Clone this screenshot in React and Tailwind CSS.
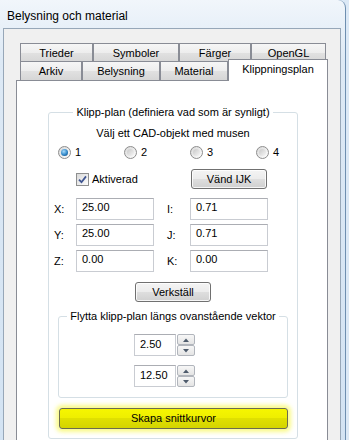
export default function App() {
  const tabIdle =
    'flex h-[19px] items-center justify-center border border-b-0 border-[#898c95] bg-[linear-gradient(#f6f6f6,#ededed_50%,#e1e1e1_50%,#d6d6d6)]';
  const field =
    'h-[22px] w-[78px] border border-[#c9ccd2] border-t-[#abadb3] bg-white pl-[5px] pt-[2px] leading-[13px]';
  const button =
    'flex h-[20px] items-center justify-center rounded-[3px] border border-[#707070] bg-[linear-gradient(#f4f4f4,#ececec_48%,#dedede_52%,#d0d0d0)] shadow-[inset_0_0_0_1px_rgba(255,255,255,0.8)] leading-[13px]';

  const Radio = ({ checked }) => (
    <span className="flex h-[13px] w-[13px] items-center justify-center rounded-full border border-[#8d8d8d] bg-[linear-gradient(135deg,#d8d8d8,#ffffff)]">
      {checked ? (
        <span className="h-[7px] w-[7px] rounded-full bg-[radial-gradient(circle_at_40%_35%,#a9dcfb,#2f86c8_55%,#0e3c69)]" />
      ) : (
        <span className="h-[7px] w-[7px] rounded-full bg-[linear-gradient(135deg,#c8c8c8,#f6f6f6)]" />
      )}
    </span>
  );

  const SpinBtn = ({ up }) => (
    <div className="flex h-[11px] items-center justify-center rounded-[2px] border border-[#b1b5bc] bg-[linear-gradient(#f7f7f7,#e4e4e4)]">
      <svg width="6" height="4" viewBox="0 0 6 4">
        <path d={up ? 'M0 4 L3 0.5 L6 4 Z' : 'M0 0 L3 3.5 L6 0 Z'} fill="#4e5b6c" />
      </svg>
    </div>
  );

  const Spin = ({ value }) => (
    <div className="ml-[75px] flex h-[22px]">
      <div className="w-[42px] border border-[#c9ccd2] border-t-[#abadb3] bg-white pl-[5px] pt-[3px] leading-[13px]">{value}</div>
      <div className="ml-[1px] flex w-[18px] flex-col">
        <SpinBtn up />
        <SpinBtn />
      </div>
    </div>
  );

  const Row = ({ a, av, b, bv }) => (
    <div className="ml-[5px] flex h-[22px] items-center">
      <span className="w-[22px] leading-[13px]">{a}</span>
      <div className={field}>{av}</div>
      <span className="ml-[13px] w-[23px] leading-[13px]">{b}</span>
      <div className={field}>{bv}</div>
    </div>
  );

  return (
    <div className="h-[440px] w-[349px] overflow-hidden bg-[#dce9f6] font-['Liberation_Sans',Arial,sans-serif] text-[11px] text-black">
      <div className="flex h-[440px] w-[346px] flex-col rounded-tr-[8px] border-r border-[#6f8fb0] bg-[linear-gradient(#f1f6fb,#dde9f5_60px,#d3e3f3)] pl-[3px] pr-[4px]">
        <div className="h-[28px] shrink-0 pl-[4px] pt-[9px] text-[12px] leading-[14px]">Belysning och material</div>

        <div className="min-h-0 flex-1 overflow-hidden border border-b-0 border-[#97a7b8] bg-[#f0f0f0] pl-[12px] pt-[14px]">
          <div className="ml-[4px] flex">
            <div className={`${tabIdle} w-[73px]`}>Trieder</div>
            <div className={`${tabIdle} w-[86px]`}>Symboler</div>
            <div className={`${tabIdle} w-[72px]`}>Färger</div>
            <div className={`${tabIdle} w-[75px]`}>OpenGL</div>
          </div>
          <div className="relative z-10 ml-[4px] -mt-[3px] flex items-end">
            <div className={`${tabIdle} w-[62px]`}>Arkiv</div>
            <div className={`${tabIdle} w-[78px]`}>Belysning</div>
            <div className={`${tabIdle} w-[68px]`}>Material</div>
            <div className="-mb-px flex h-[22px] w-[100px] items-center justify-center border border-b-0 border-[#898c95] bg-white pb-[2px]">
              Klippningsplan
            </div>
          </div>

          <div className="h-[420px] w-[312px] border border-[#898c95] bg-white pl-[31px] pt-[24px]">
            <fieldset className="w-[250px] rounded-[3px] border border-[#d5dfe5] pb-[9px]">
              <legend className="mx-auto px-[3px] leading-[14px]">Klipp-plan (definiera vad som är synligt)</legend>

              <div className="mt-[7px] text-center leading-[14px]">Välj ett CAD-objekt med musen</div>

              <div className="mt-[5px] flex h-[14px] items-center pl-[9px]">
                <label className="flex w-[66px] items-center gap-[4px]"><Radio checked />1</label>
                <label className="flex w-[66px] items-center gap-[4px]"><Radio />2</label>
                <label className="flex w-[66px] items-center gap-[4px]"><Radio />3</label>
                <label className="flex items-center gap-[4px]"><Radio />4</label>
              </div>

              <div className="mt-[10px] flex h-[20px] items-center pl-[27px]">
                <label className="flex w-[115px] items-center gap-[3px]">
                  <span className="flex h-[13px] w-[13px] items-center justify-center border border-[#8e8f8f] bg-[linear-gradient(135deg,#d9d9d9,#fdfdfd)]">
                    <svg width="9" height="9" viewBox="0 0 9 9">
                      <path d="M1 4.6 L3.5 7.2 L8 1.4" stroke="#3f5591" strokeWidth="1.8" fill="none" />
                    </svg>
                  </span>
                  Aktiverad
                </label>
                <button className={`${button} w-[76px]`}>Vänd IJK</button>
              </div>

              <div className="mt-[9px] flex flex-col gap-[4px]">
                <Row a="X:" av="25.00" b="I:" bv="0.71" />
                <Row a="Y:" av="25.00" b="J:" bv="0.71" />
                <Row a="Z:" av="0.00" b="K:" bv="0.00" />
              </div>

              <button className={`${button} mx-auto mt-[10px] w-[76px]`}>Verkställ</button>

              <fieldset className="mx-[9px] mt-[7px] rounded-[3px] border border-[#d5dfe5] pb-[10px]">
                <legend className="mx-auto px-[3px] leading-[14px]">Flytta klipp-plan längs ovanstående vektor</legend>
                <div className="mt-[11px] flex flex-col gap-[9px]">
                  <Spin value="2.50" />
                  <Spin value="12.50" />
                </div>
              </fieldset>

              <button className="ml-[10px] mt-[10px] flex h-[21px] w-[229px] items-center justify-center rounded-[3px] border border-[#6b6b50] bg-[linear-gradient(#f6f600,#eeee00_50%,#e0e000_50%,#d4d400)] leading-[13px] shadow-[0_0_4px_3px_rgba(246,246,40,0.55)]">
                Skapa snittkurvor
              </button>
            </fieldset>
          </div>
        </div>
      </div>
    </div>
  );
}
